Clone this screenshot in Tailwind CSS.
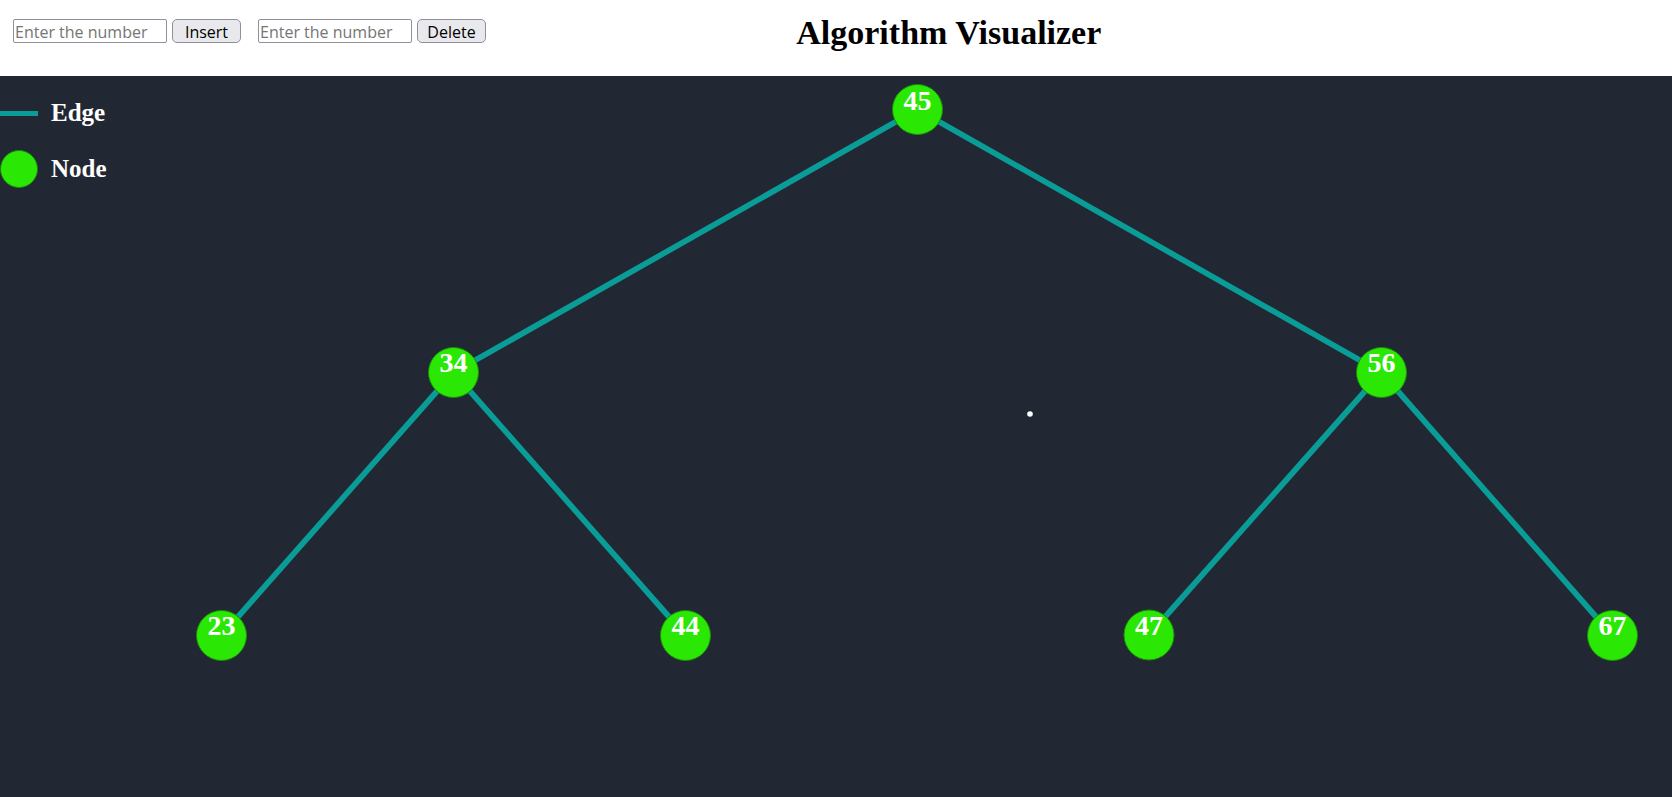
<!DOCTYPE html>
<html lang="en">
<head>
<meta charset="utf-8">
<title>Algorithm Visualizer</title>
<script src="https://cdn.jsdelivr.net/npm/@tailwindcss/browser@4"></script>
</head>
<body class="flex min-h-screen flex-col bg-[#222833] font-['Liberation_Serif',serif]">
<header class="flex h-19 shrink-0 items-start bg-white pl-[13px] text-black">
  <div class="flex flex-1 gap-[17px] pt-[19px] font-['Open_Sans',sans-serif] text-base">
    <form class="flex gap-[5px]">
      <input type="text" aria-label="Number to insert" placeholder="Enter the number" class="h-6 w-[154px] rounded-xs border border-[#8f8f9d] bg-white px-px pt-0.5 placeholder:text-[#757575]">
      <button type="button" class="flex h-6 w-[69px] items-center justify-center rounded-[5px] border border-[#8f8f9d] bg-[#e9e9ed] pt-0.5">Insert</button>
    </form>
    <form class="flex gap-[5px]">
      <input type="text" aria-label="Number to delete" placeholder="Enter the number" class="h-6 w-[154px] rounded-xs border border-[#8f8f9d] bg-white px-px pt-0.5 placeholder:text-[#757575]">
      <button type="button" class="flex h-6 w-[69px] items-center justify-center rounded-[5px] border border-[#8f8f9d] bg-[#e9e9ed] pt-0.5">Delete</button>
    </form>
  </div>
  <h1 class="pt-[13px] text-[34px] leading-10 font-bold">Algorithm Visualizer</h1>
  <div class="w-[34.4%] shrink-0"></div>
</header>
<main class="relative">
  <ul class="absolute top-[17px] left-0 flex flex-col gap-4 text-[25px] leading-10 font-bold text-white">
    <li class="flex items-center gap-[13px]">
      <svg width="38" height="38" viewBox="0 0 38 38" aria-hidden="true"><path d="M0 19.5H38" stroke="#0a9c96" stroke-width="5"/></svg>Edge
    </li>
    <li class="flex items-center gap-[13px]">
      <svg width="38" height="38" viewBox="0 0 38 38" aria-hidden="true"><circle cx="19" cy="19" r="18.5" fill="#2be804" stroke="#1a8a0c"/></svg>Node
    </li>
  </ul>
  <svg class="block h-auto w-full" viewBox="0 0 1672 721" role="img" aria-label="Binary search tree">
    <g stroke="#0a9c96" stroke-width="5.7">
      <path d="M917.5 33.5L453.5 296.5M917.5 33.5L1381.5 296.5M453.5 296.5L221.5 559.5M453.5 296.5L685.5 559.5M1381.5 296.5L1149 559M1381.5 296.5L1612.5 559.5"/>
    </g>
    <g fill="#2be804" stroke="#1a8a0c">
      <circle cx="917.5" cy="33.5" r="25"/>
      <circle cx="453.5" cy="296.5" r="25"/>
      <circle cx="1381.5" cy="296.5" r="25"/>
      <circle cx="221.5" cy="559.5" r="25"/>
      <circle cx="685.5" cy="559.5" r="25"/>
      <circle cx="1149" cy="559" r="25"/>
      <circle cx="1612.5" cy="559.5" r="25"/>
    </g>
    <g class="text-[28px] font-bold" fill="#ffffff" text-anchor="middle">
      <text x="917.5" y="34">45</text>
      <text x="453.5" y="296">34</text>
      <text x="1381.5" y="296">56</text>
      <text x="221.5" y="559">23</text>
      <text x="685.5" y="559">44</text>
      <text x="1149" y="559">47</text>
      <text x="1612.5" y="559">67</text>
    </g>
    <circle cx="1030" cy="338" r="2.8" fill="#ffffff"/>
  </svg>
</main>
</body>
</html>
